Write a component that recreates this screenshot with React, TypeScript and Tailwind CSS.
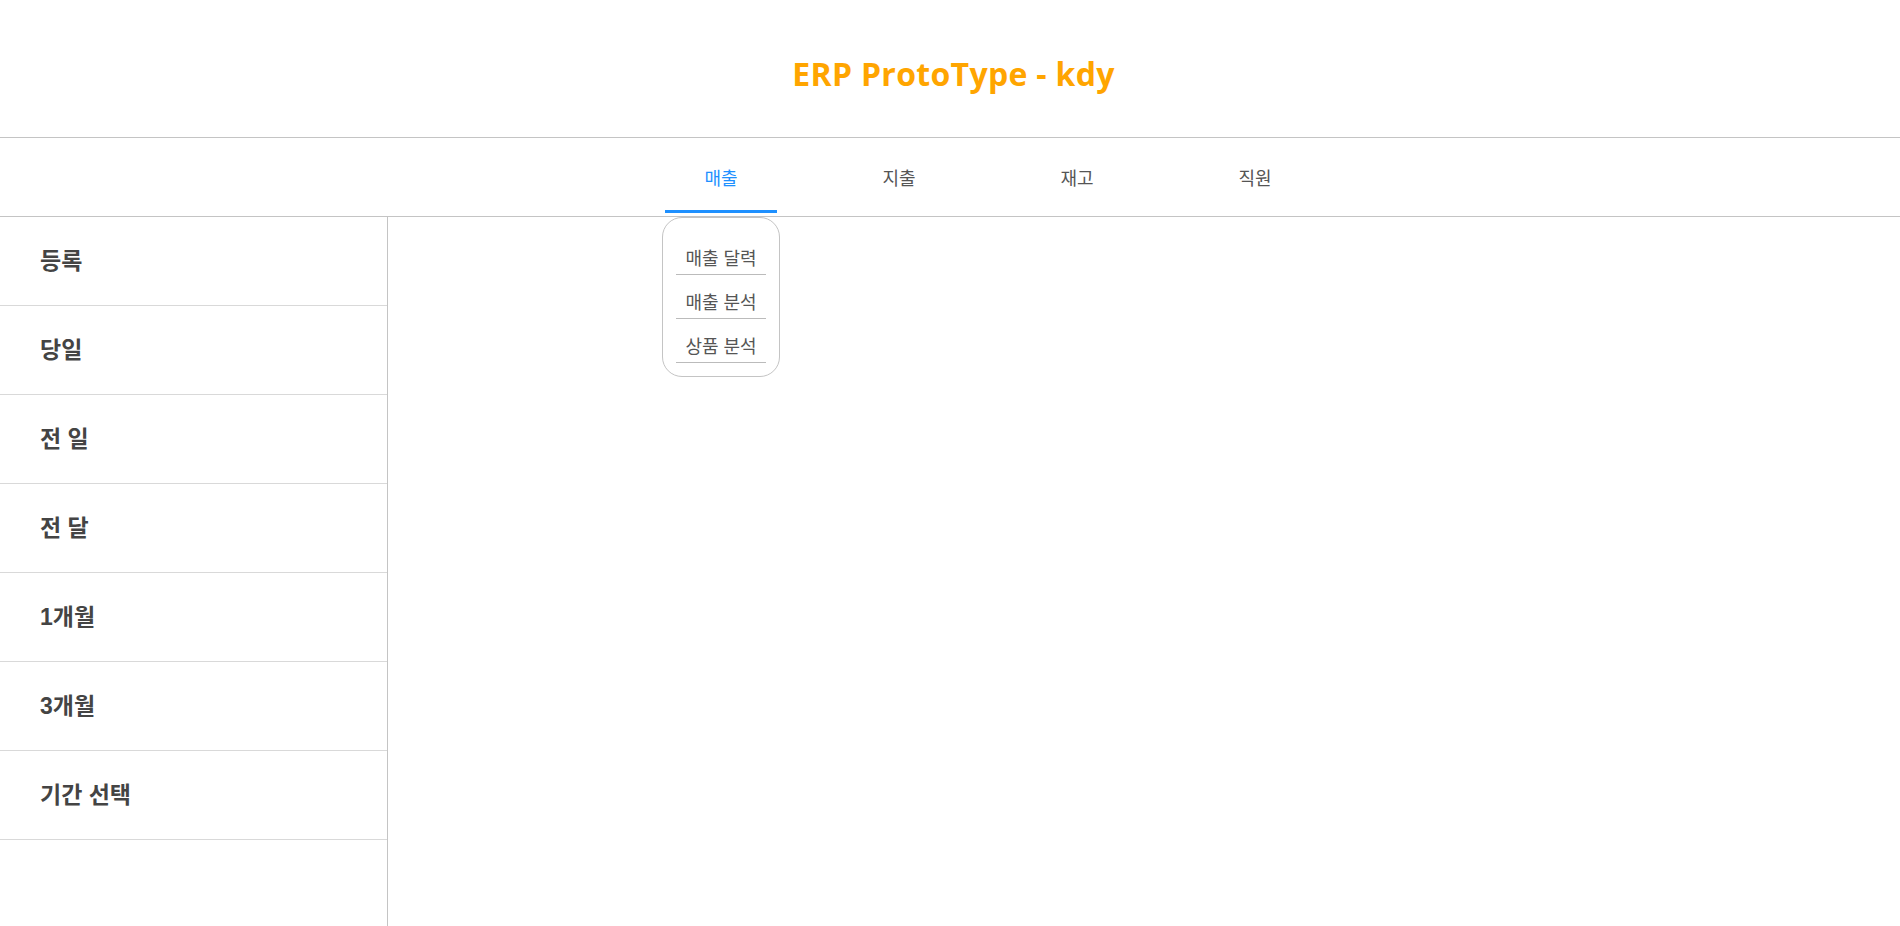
import {useState} from "react";

const tabs = ["매출", "지출", "재고", "직원"];
const subMenu = ["매출 달력", "매출 분석", "상품 분석"];
const sideMenu = ["등록", "당일", "전 일", "전 달", "1개월", "3개월", "기간 선택"];

function App() {
    const [active] = useState(0);

    return (
        <div className="min-h-screen bg-white font-['Liberation_Sans','Noto_Sans_CJK_KR',sans-serif]">
            <header className="h-[138px] border-b border-[#c4c4c4] flex items-center justify-center pt-[10px] pl-[7px]">
                <h1 className="text-[32px] tracking-[0.3px] font-bold text-[#ffa500] font-['Open_Sans','Noto_Sans_CJK_KR',sans-serif]">
                    ERP ProtoType - kdy
                </h1>
            </header>
            <nav className="h-[79px] border-b border-[#c4c4c4]">
                <ul className="flex justify-center gap-[66px] pl-[76px] h-full">
                    {tabs.map((tab, i) => (
                        <li key={tab} className="relative w-[112px] flex flex-col items-center">
                            <span className={`pt-[29px] leading-6 text-[18px] ${i === active ? "text-[#1e90ff]" : "text-[#555]"}`}>
                                {tab}
                            </span>
                            <div className={`mt-[19px] h-[3px] w-full ${i === active ? "bg-[#1e90ff]" : "bg-transparent"}`}/>
                            {i === active && (
                                <ul className="absolute left-[-3px] top-[79px] w-[118px] rounded-[20px] border border-[#c4c4c4] bg-white pt-[29px] pb-[13px] flex flex-col gap-[16px] z-10">
                                    {subMenu.map((item) => (
                                        <li key={item} className="mx-auto w-[90px] border-b border-[#bbb] pb-[3px] text-center leading-6 text-[18px] text-[#555]">
                                            {item}
                                        </li>
                                    ))}
                                </ul>
                            )}
                        </li>
                    ))}
                </ul>
            </nav>
            <div className="flex">
                <aside className="w-[388px] min-h-[709px] border-r border-[#c4c4c4]">
                    {sideMenu.map((menu) => (
                        <div key={menu} className="h-[89px] border-b border-[#d9d9d9] flex items-center pl-[40px]">
                            <span className="text-[23px] font-bold text-[#444]">{menu}</span>
                        </div>
                    ))}
                </aside>
                <main className="flex-1"/>
            </div>
        </div>
    )
}

export default App;
